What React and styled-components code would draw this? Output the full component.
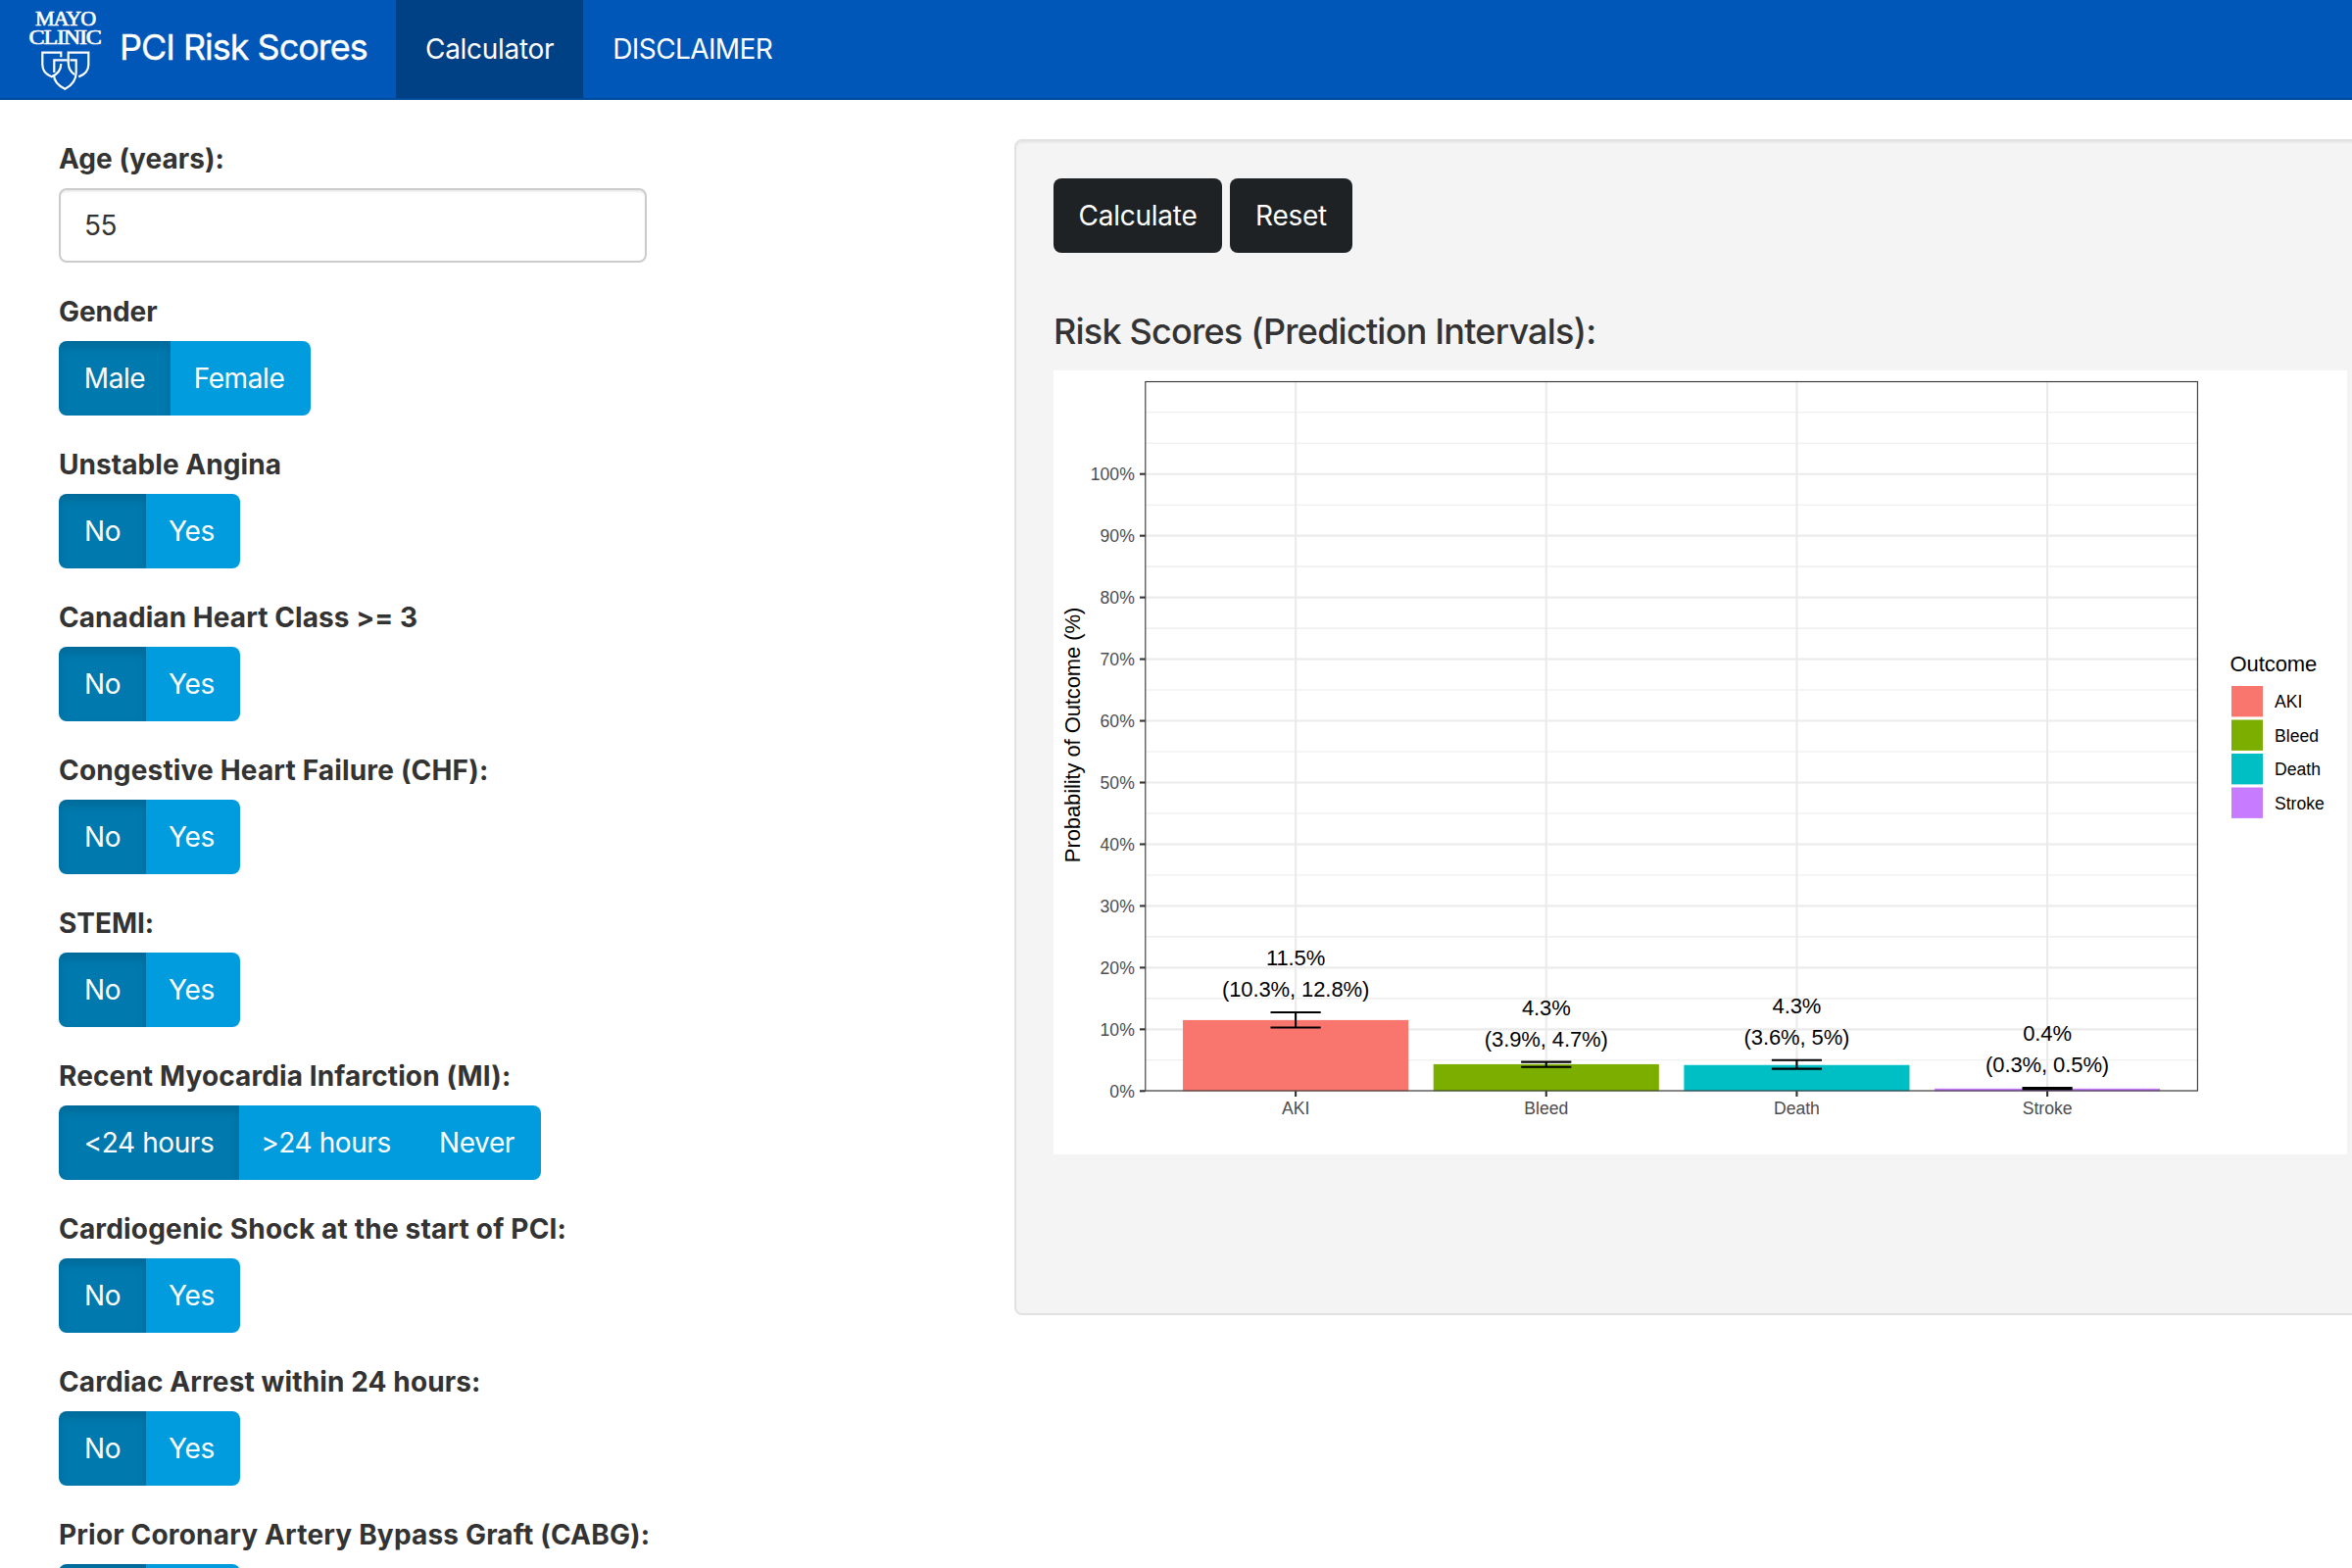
import React, { useState } from "react";
import styled, { createGlobalStyle } from "styled-components";

const GlobalStyle = createGlobalStyle`
  *, *::before, *::after { box-sizing: border-box; }
  html, body { margin: 0; height: 100%; overflow: hidden; background: #fff; }
  body {
    font-family: Inter, "Liberation Sans", sans-serif;
    font-size: 28px;
    line-height: 40px;
    letter-spacing: -0.4px;
    color: #333;
  }
`;

const Navbar = styled.nav`
  display: flex;
  height: 102px;
  background: #0057b8;
  border-bottom: 2px solid #004a9c;
  color: #fff;
`;

const Brand = styled.a`
  display: flex;
  align-items: center;
  width: 404px;
  padding-left: 26px;
  font-size: 36px;
  letter-spacing: -1.03px;
  white-space: nowrap;
`;

const LogoSvg = styled.svg`
  display: block;
  width: 80px;
  height: 100px;
  margin-right: 16px;
`;

const BrandName = styled.span`
  padding-bottom: 4px;
  -webkit-text-stroke: 0.35px #fff;
`;

const NavLink = styled.a`
  display: flex;
  align-items: center;
  padding: 0 30px;
  height: 100px;
  letter-spacing: ${(p) => p.$tracking};
  background: ${(p) => (p.$active ? "#004085" : "transparent")};
`;

const Page = styled.main`
  display: flex;
  align-items: flex-start;
  padding: 40px 0 0 60px;
`;

const Form = styled.form`
  flex: 0 0 975px;
  display: flex;
  flex-direction: column;
  gap: 30px;
`;

const Field = styled.div`
  display: flex;
  flex-direction: column;
  align-items: flex-start;
  gap: 10px;
`;

const Label = styled.span`
  font-weight: 700;
  white-space: nowrap;
  letter-spacing: ${(p) => p.$tracking}px;
`;

const NumberInput = styled.input`
  width: 600px;
  height: 76px;
  padding: 0 24px;
  border: 2px solid #ccc;
  border-radius: 8px;
  background: #fff;
  box-shadow: inset 0 2px 2px rgba(0, 0, 0, 0.075);
  color: #333;
  font: inherit;
  letter-spacing: -0.6px;
  outline: none;
`;

const ButtonGroup = styled.div`
  display: flex;
  height: 76px;
  border-radius: 8px;
  overflow: hidden;
`;

const Choice = styled.button`
  width: ${(p) => p.$width}px;
  padding: 0;
  border: 0;
  font: inherit;
  letter-spacing: inherit;
  color: #fff;
  white-space: nowrap;
  background: ${(p) => (p.$active ? "#0079ae" : "#009cde")};
  box-shadow: ${(p) => (p.$active ? "inset 0 6px 10px rgba(0, 0, 0, 0.125)" : "none")};

  & + & {
    padding-right: 3px;
  }
`;

const Well = styled.section`
  flex: 0 0 1400px;
  height: 1200px;
  padding: 38px;
  border: 2px solid #e2e2e2;
  border-radius: 8px;
  background: #f4f4f4;
  box-shadow: inset 0 2px 2px rgba(0, 0, 0, 0.05);
`;

const Actions = styled.div`
  display: flex;
  gap: 8px;
`;

const ActionButton = styled.button`
  width: ${(p) => p.$width}px;
  height: 76px;
  padding: 0;
  border: 0;
  border-radius: 8px;
  background: #1e2224;
  color: #fff;
  font: inherit;
  letter-spacing: -0.25px;
`;

const Heading = styled.h4`
  margin: 60px 0 20px;
  font-size: 36px;
  line-height: 40px;
  font-weight: 500;
  letter-spacing: -0.78px;
  white-space: nowrap;
`;

const ChartSvg = styled.svg`
  display: block;
  width: 1320px;
  height: 800px;
  background: #fff;
  font-family: "Liberation Sans", Arial, sans-serif;
  letter-spacing: 0;
`;

const ChartTitles = styled.g`
  font-size: 22px;
  letter-spacing: -0.1px;
  fill: #000;
`;

const YES_NO = [["No", 89], ["Yes", 96]];

const QUESTIONS = [
  { label: "Gender", tracking: -0.05, options: [["Male", 114], ["Female", 143]] },
  { label: "Unstable Angina", tracking: 0.06, options: YES_NO },
  { label: "Canadian Heart Class >= 3", tracking: 0.07, options: YES_NO },
  { label: "Congestive Heart Failure (CHF):", tracking: 0.17, options: YES_NO },
  { label: "STEMI:", tracking: -0.05, options: YES_NO },
  {
    label: "Recent Myocardia Infarction (MI):",
    tracking: 0.11,
    options: [["<24 hours", 184], [">24 hours", 180], ["Never", 128]],
  },
  { label: "Cardiogenic Shock at the start of PCI:", tracking: 0.18, options: YES_NO },
  { label: "Cardiac Arrest within 24 hours:", tracking: 0.12, options: YES_NO },
  { label: "Prior Coronary Artery Bypass Graft (CABG):", tracking: 0.18, options: YES_NO },
];

const OUTCOMES = [
  { name: "AKI", color: "#f8766d", value: 11.5, low: 10.3, high: 12.75, text: "11.5%", range: "(10.3%, 12.8%)", y: 606.7 },
  { name: "Bleed", color: "#7cae00", value: 4.35, low: 3.9, high: 4.72, text: "4.3%", range: "(3.9%, 4.7%)", y: 657.7 },
  { name: "Death", color: "#00bfc4", value: 4.22, low: 3.6, high: 5, text: "4.3%", range: "(3.6%, 5%)", y: 656 },
  { name: "Stroke", color: "#c77cff", value: 0.4, low: 0.3, high: 0.5, text: "0.4%", range: "(0.3%, 0.5%)", y: 684 },
];

const PLOT = { left: 93.7, right: 1167.5, top: 11.5, bottom: 735.3 };
const STEP = (PLOT.right - PLOT.left) / 4.2;
const yOf = (percent) => PLOT.bottom - percent * 6.296;
const xOf = (index) => PLOT.left + STEP * (0.6 + index);

function Logo() {
  return (
    <LogoSvg viewBox="0 0 80 100" fill="none" stroke="#fff">
      <g fill="#fff" strokeWidth="0.6" fontFamily="Liberation Serif, serif" fontSize="20">
        <text x="10" y="26" textLength="61" lengthAdjust="spacingAndGlyphs">MAYO</text>
        <text x="3.6" y="45.3" textLength="73" lengthAdjust="spacingAndGlyphs">CLINIC</text>
      </g>
      <g strokeWidth="2.2">
        <path d="M36.3 58.3V53.7H17.3V66C17.3 72 21 76 26.7 78.2C33 75.6 36.2 71.5 36.3 65" />
        <path d="M43.7 64V53.7H64.3V66C64.3 72.5 60.2 76.2 54.3 78.4" />
        <path d="M43.7 63.5C43.7 69.5 46 73.5 50 76" />
        <path d="M42.8 61.3H29.3V74" />
        <path d="M45.5 61.3H51.7V74C51.7 81 47.6 87 40.3 90.8C32.8 87 29 81.5 29 76.5" />
      </g>
    </LogoSvg>
  );
}

function Question({ label, tracking, options }) {
  const [selected, setSelected] = useState(0);
  return (
    <Field>
      <Label $tracking={tracking}>{label}</Label>
      <ButtonGroup>
        {options.map(([text, width], i) => (
          <Choice key={text} type="button" $width={width} $active={i === selected} onClick={() => setSelected(i)}>
            {text}
          </Choice>
        ))}
      </ButtonGroup>
    </Field>
  );
}

function RiskChart() {
  const major = Array.from({ length: 11 }, (_, i) => i * 10);
  const minor = [...Array.from({ length: 11 }, (_, i) => i * 10 + 5), 110];
  return (
    <ChartSvg viewBox="0 0 1320 800">
      <g stroke="#ebebeb">
        {minor.map((p) => (
          <line key={p} x1={PLOT.left} x2={PLOT.right} y1={yOf(p)} y2={yOf(p)} strokeWidth="1.1" />
        ))}
        {major.map((p) => (
          <line key={p} x1={PLOT.left} x2={PLOT.right} y1={yOf(p)} y2={yOf(p)} strokeWidth="2.1" />
        ))}
        {OUTCOMES.map((o, i) => (
          <line key={o.name} x1={xOf(i)} x2={xOf(i)} y1={PLOT.top} y2={PLOT.bottom} strokeWidth="2.1" />
        ))}
      </g>
      {OUTCOMES.map((o, i) => (
        <rect key={o.name} x={xOf(i) - STEP * 0.45} y={yOf(o.value)} width={STEP * 0.9} height={PLOT.bottom - yOf(o.value)} fill={o.color} />
      ))}
      {OUTCOMES.map((o, i) => (
        <g key={o.name} stroke="#000" strokeWidth="2.1">
          <path fill="none" d={`M${xOf(i) - 25.6} ${yOf(o.high)}h51.2M${xOf(i) - 25.6} ${yOf(o.low)}h51.2M${xOf(i)} ${yOf(o.high)}V${yOf(o.low)}`} />
        </g>
      ))}
      <ChartTitles textAnchor="middle">
        {OUTCOMES.map((o, i) => (
          <React.Fragment key={o.name}>
            <text x={xOf(i)} y={o.y}>{o.text}</text>
            <text x={xOf(i)} y={o.y + 32}>{o.range}</text>
          </React.Fragment>
        ))}
        <text transform="translate(27 372) rotate(-90)">Probability of Outcome (%)</text>
      </ChartTitles>
      <rect x="93.8" y="11.5" width="1073.6" height="723.5" fill="none" stroke="#333" strokeWidth="1.1" />
      <g stroke="#333" strokeWidth="2.1">
        {major.map((p) => (
          <line key={p} x1="88" x2={PLOT.left} y1={yOf(p)} y2={yOf(p)} />
        ))}
        {OUTCOMES.map((o, i) => (
          <line key={o.name} x1={xOf(i)} x2={xOf(i)} y1={PLOT.bottom} y2="741" />
        ))}
      </g>
      <g fontSize="17.6" fill="#4d4d4d">
        {major.map((p) => (
          <text key={p} x="82.8" y={yOf(p) + 6.4} textAnchor="end">{p}%</text>
        ))}
        {OUTCOMES.map((o, i) => (
          <text key={o.name} x={xOf(i)} y="758.6" textAnchor="middle">{o.name}</text>
        ))}
      </g>
      <ChartTitles>
        <text x="1200.6" y="306.7">Outcome</text>
      </ChartTitles>
      {OUTCOMES.map((o, i) => (
        <g key={o.name}>
          <rect x="1202" y={322 + i * 34.5} width="32" height="31.4" fill={o.color} />
          <text x="1246" y={344.2 + i * 34.56} fontSize="17.6">{o.name}</text>
        </g>
      ))}
    </ChartSvg>
  );
}

export default function App() {
  const [age, setAge] = useState("55");
  return (
    <>
      <GlobalStyle />
      <Navbar>
        <Brand>
          <Logo />
          <BrandName>PCI Risk Scores</BrandName>
        </Brand>
        <NavLink $active $tracking="-0.3px">Calculator</NavLink>
        <NavLink $tracking="-0.6px">DISCLAIMER</NavLink>
      </Navbar>
      <Page>
        <Form onSubmit={(e) => e.preventDefault()}>
          <Field>
            <Label $tracking={0.05}>Age (years):</Label>
            <NumberInput value={age} onChange={(e) => setAge(e.target.value)} />
          </Field>
          {QUESTIONS.map((q) => (
            <Question key={q.label} {...q} />
          ))}
        </Form>
        <Well>
          <Actions>
            <ActionButton $width={172}>Calculate</ActionButton>
            <ActionButton $width={125}>Reset</ActionButton>
          </Actions>
          <Heading>Risk Scores (Prediction Intervals):</Heading>
          <RiskChart />
        </Well>
      </Page>
    </>
  );
}
